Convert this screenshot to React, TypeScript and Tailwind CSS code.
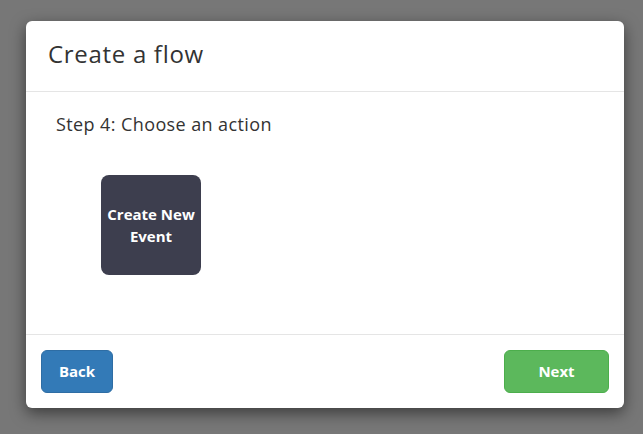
import React from "react";

export default function App() {
  return (
    <div className="w-[643px] h-[434px] bg-[#777777] pt-[21px] pl-[26px] font-['Open_Sans','Noto_Sans',sans-serif]">
      <div className="w-[598px] h-[387px] bg-white rounded-md shadow-[0_5px_15px_rgba(0,0,0,0.5)] flex flex-col">
        {/* Header */}
        <div className="h-[71px] border-b border-[#e5e5e5] flex items-center px-[22px]">
          <h4 className="text-[24px] text-[#333333] leading-none pb-[4px] tracking-[0.7px]">Create a flow</h4>
        </div>

        {/* Body */}
        <div className="flex-1 px-[30px] pt-[20px]">
          <p className="text-[18px] text-[#333333] leading-[24px] tracking-[0.4px]">Step 4: Choose an action</p>
          <div className="mt-[39px] ml-[45px] w-[100px] h-[100px] rounded-lg bg-[#3d3e4e] flex items-center justify-center text-center text-white text-[15px] font-bold leading-[22px] pb-[1px]">
            Create New
            <br />
            Event
          </div>
        </div>

        {/* Footer */}
        <div className="h-[74px] border-t border-[#e5e5e5] px-[15px] flex items-center justify-between">
          <button className="w-[72px] h-[43px] rounded-md bg-[#337ab7] border border-[#2e6da4] text-white text-[15px] font-bold">
            Back
          </button>
          <button className="w-[105px] h-[43px] rounded-md bg-[#5cb85c] border border-[#4cae4c] text-white text-[15px] font-bold">
            Next
          </button>
        </div>
      </div>
    </div>
  );
}
